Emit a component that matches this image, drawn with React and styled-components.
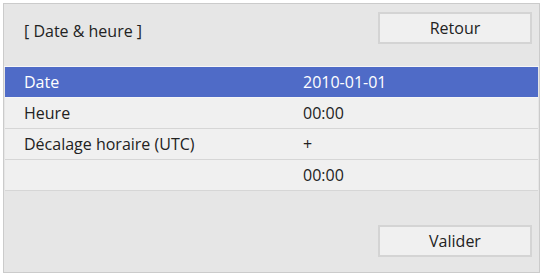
import React from "react";
import styled, { createGlobalStyle } from "styled-components";

const GlobalStyle = createGlobalStyle`
  html, body { margin: 0; padding: 0; background: #ffffff; }
  body { font-family: "Open Sans", "Noto Sans", sans-serif; }
`;

const Frame = styled.div`
  box-sizing: border-box;
  margin: 3px 0 0 3px;
  width: 537px;
  height: 270px;
  border: 1px solid #cbcbcb;
  background: #e6e6e6;
  display: flex;
  flex-direction: column;
`;

const Header = styled.div`
  height: 63px;
  display: flex;
  justify-content: space-between;
  align-items: flex-start;
  padding: 8px 7px 0 20px;
  box-sizing: border-box;
  border-bottom: 1px solid #f6f6f6;
`;

const Title = styled.div`
  font-size: 16px;
  line-height: 22px;
  color: #222;
  margin-top: 8px;
`;

const Button = styled.button`
  box-sizing: border-box;
  width: 154px;
  height: 32px;
  background: #f0f0f0;
  border: 2px solid #d4d4d4;
  font-family: inherit;
  font-size: 16px;
  color: #222;
  padding: 0;
`;

const List = styled.div`
  width: 533px;
  display: flex;
  flex-direction: column;
  margin: 0 1px;
`;

const Row = styled.div`
  box-sizing: border-box;
  width: 100%;
  display: flex;
  align-items: center;
  height: 31px;
  padding-left: 19px;
  border-bottom: 1px solid ${(p) => (p.$active ? "#f6f6f6" : "#d6d6d6")};
  background: ${(p) => (p.$active ? "#4f6bc7" : "#f0f0f0")};
  color: ${(p) => (p.$active ? "#ffffff" : "#222222")};
  font-size: 16px;
`;

const Label = styled.span`
  width: 279px;
`;

const Footer = styled.div`
  flex: 1;
  display: flex;
  justify-content: flex-end;
  align-items: flex-end;
  padding: 0 7px 15px 0;
`;

const rows = [
  { label: "Date", value: "2010-01-01", active: true },
  { label: "Heure", value: "00:00" },
  { label: "Décalage horaire (UTC)", value: "+" },
  { label: "", value: "00:00" },
];

export default function App() {
  return (
    <>
      <GlobalStyle />
      <Frame>
        <Header>
          <Title>[ Date &amp; heure ]</Title>
          <Button>Retour</Button>
        </Header>
        <List>
          {rows.map((r, i) => (
            <Row key={i} $active={r.active}>
              <Label>{r.label}</Label>
              <span>{r.value}</span>
            </Row>
          ))}
        </List>
        <Footer>
          <Button>Valider</Button>
        </Footer>
      </Frame>
    </>
  );
}
